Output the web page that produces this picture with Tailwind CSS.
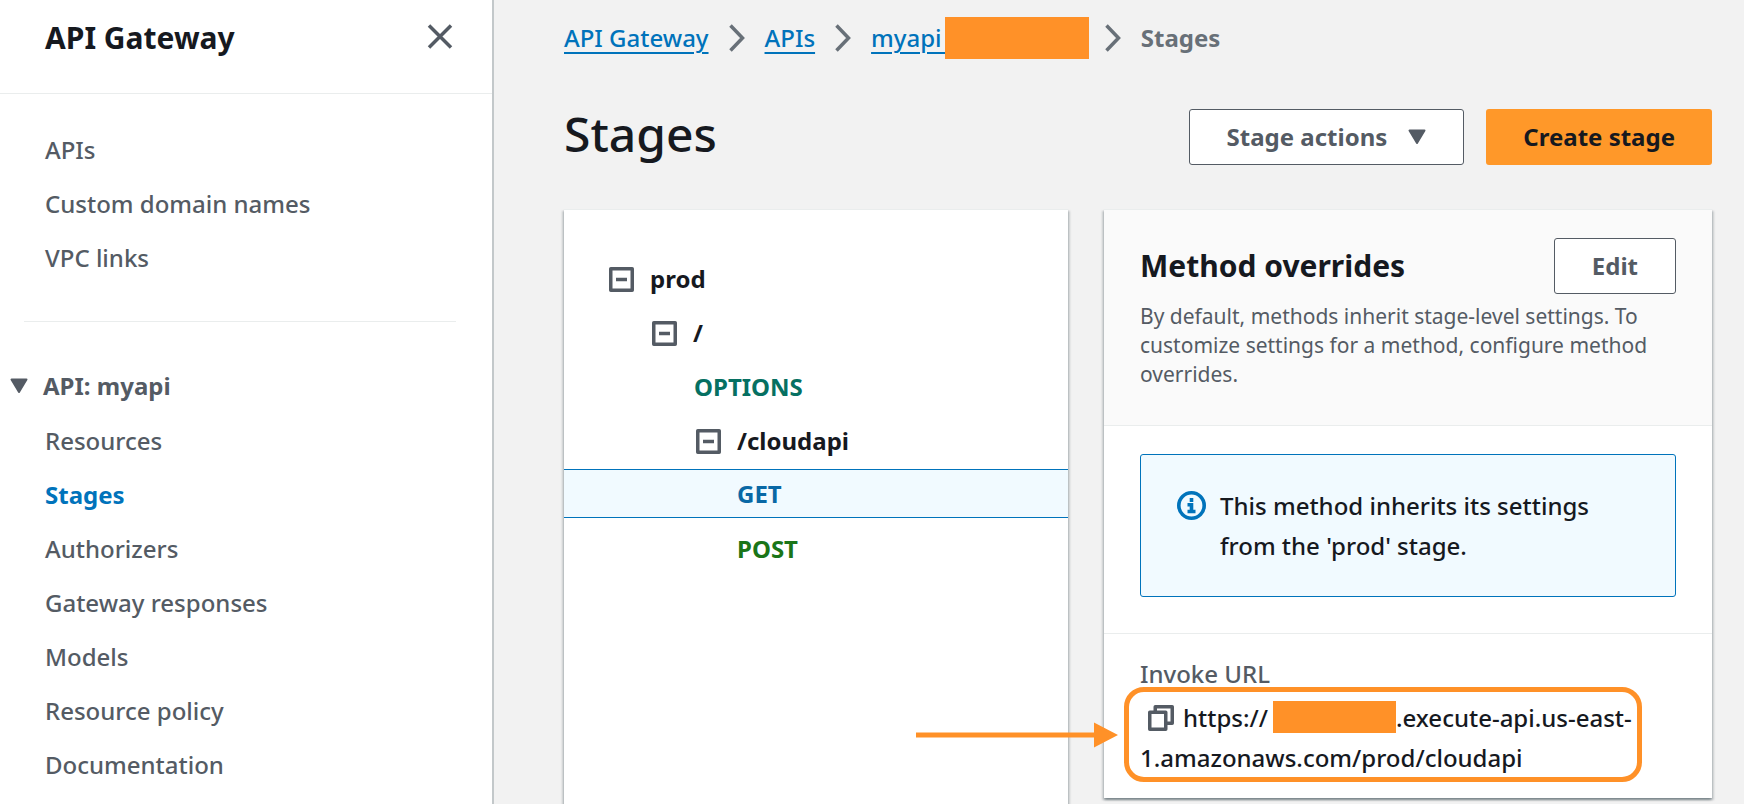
<!DOCTYPE html>
<html lang="en">
<head>
<meta charset="utf-8">
<meta name="viewport" content="width=device-width, initial-scale=1">
<title>API Gateway - Stages</title>
<script src="https://cdn.jsdelivr.net/npm/@tailwindcss/browser@4"></script>
</head>
<body class="flex min-h-screen bg-[#f2f2f2] font-['Noto_Sans','Open_Sans',sans-serif] text-2xl font-medium text-[#16191f]">

<!-- Side navigation -->
<aside class="w-[494px] shrink-0 border-r-2 border-[#c3c8ca] bg-white text-[#545b64]">
  <header class="flex h-[94px] items-start justify-between border-b border-[#eaeded] pt-5 pr-[39px] pl-[45px]">
    <h2 class="text-[30px] leading-9 font-bold text-[#16191f]">API Gateway</h2>
    <button type="button" aria-label="Close navigation" class="mt-1">
      <svg class="size-[26px]" viewBox="0 0 26 26" fill="none" stroke="#545b64" stroke-width="3.500"><path d="M2 1.500l22 22M24 1.500L2 23.500"/></svg>
    </button>
  </header>
  <nav aria-label="API Gateway" class="pt-[29px]">
    <ul class="pl-[45px] leading-[54px]">
      <li><a href="#apis">APIs</a></li>
      <li><a href="#domains">Custom domain names</a></li>
      <li><a href="#vpc">VPC links</a></li>
    </ul>
    <hr class="my-9 mr-9 ml-6 border-[#eaeded]">
    <button type="button" aria-expanded="true" class="flex h-14 items-center gap-[15px] pl-[10px] font-bold">
      <svg class="h-4 w-[18px]" viewBox="0 0 18 16" fill="#545b64" stroke="#545b64" stroke-width="2" stroke-linejoin="round"><path d="M1.500 1.500h15L9 14z"/></svg>
      API: myapi
    </button>
    <ul class="pl-[45px] leading-[54px]">
      <li><a href="#resources">Resources</a></li>
      <li><a href="#stages" aria-current="page" class="font-bold text-[#0073bb]">Stages</a></li>
      <li><a href="#authorizers">Authorizers</a></li>
      <li><a href="#responses">Gateway responses</a></li>
      <li><a href="#models">Models</a></li>
      <li><a href="#policy">Resource policy</a></li>
      <li><a href="#documentation">Documentation</a></li>
    </ul>
  </nav>
</aside>

<main class="flex min-w-0 flex-1 flex-col pt-4 pr-8 pl-[70px]">
  <nav aria-label="Breadcrumb">
    <ol class="flex h-11 items-center gap-5 text-[#0073bb]">
      <li><a href="#home" class="underline decoration-2 underline-offset-5">API Gateway</a></li>
      <li aria-hidden="true"><svg class="h-7 w-4" viewBox="0 0 16 28" fill="none" stroke="#687078" stroke-width="3.500"><path d="M1.500 1.500L13.500 14L1.500 26.500"/></svg></li>
      <li><a href="#apis" class="underline decoration-2 underline-offset-5">APIs</a></li>
      <li aria-hidden="true"><svg class="h-7 w-4" viewBox="0 0 16 28" fill="none" stroke="#687078" stroke-width="3.500"><path d="M1.500 1.500L13.500 14L1.500 26.500"/></svg></li>
      <li class="flex items-center"><a href="#myapi" class="whitespace-pre underline decoration-2 underline-offset-5">myapi </a><span class="-mr-1 -ml-[3px] h-[42px] w-36 bg-[#ff9128]"></span></li>
      <li aria-hidden="true"><svg class="h-7 w-4" viewBox="0 0 16 28" fill="none" stroke="#687078" stroke-width="3.500"><path d="M1.500 1.500L13.500 14L1.500 26.500"/></svg></li>
      <li aria-current="page" class="font-bold text-[#687078]">Stages</li>
    </ol>
  </nav>

  <div class="mt-[45px] flex items-start justify-between">
    <h1 class="text-5xl leading-[58px]">Stages</h1>
    <div class="mt-1 flex gap-[22px] font-bold">
      <button type="button" aria-haspopup="menu" class="flex h-14 items-center gap-[21px] rounded-[3px] border border-[#545b64] bg-white px-[37px] text-[#545b64]">
        Stage actions
        <svg class="h-4 w-[18px]" viewBox="0 0 18 16" fill="#545b64" stroke="#545b64" stroke-width="2" stroke-linejoin="round"><path d="M1.500 1.500h15L9 14z"/></svg>
      </button>
      <button type="button" class="h-14 rounded-[3px] bg-[#ff9829] px-[37px]">Create stage</button>
    </div>
  </div>

  <div class="mt-11 grid flex-1 grid-cols-[504fr_608fr] gap-9">
    <!-- Stage tree -->
    <section aria-label="Stage tree" class="border-t border-[#eaeded] bg-white pt-[42px] font-bold shadow-[0_2px_2px_rgba(0,28,36,0.3),2px_2px_2px_rgba(0,28,36,0.15),-2px_2px_2px_rgba(0,28,36,0.15)]">
      <ul>
        <li class="flex h-[54px] items-center gap-4 pl-[45px]">
          <button type="button" aria-label="Collapse prod"><svg class="size-[25px]" viewBox="0 0 25 25" fill="none" stroke="#545b64" stroke-width="3.500" stroke-linejoin="round"><path d="M1.750 1.750h21.500v21.500h-21.500zM7 12.500h11"/></svg></button>
          prod
        </li>
        <li class="flex h-[54px] items-center gap-4 pl-[88px]">
          <button type="button" aria-label="Collapse /"><svg class="size-[25px]" viewBox="0 0 25 25" fill="none" stroke="#545b64" stroke-width="3.500" stroke-linejoin="round"><path d="M1.750 1.750h21.500v21.500h-21.500zM7 12.500h11"/></svg></button>
          /
        </li>
        <li class="flex h-[54px] items-center pl-[130px]"><a href="#options" class="text-[#067062]">OPTIONS</a></li>
        <li class="flex h-[54px] items-center gap-4 pl-[132px]">
          <button type="button" aria-label="Collapse /cloudapi"><svg class="size-[25px]" viewBox="0 0 25 25" fill="none" stroke="#545b64" stroke-width="3.500" stroke-linejoin="round"><path d="M1.750 1.750h21.500v21.500h-21.500zM7 12.500h11"/></svg></button>
          /cloudapi
        </li>
        <li class="mt-px mb-1 flex h-[49px] items-center border-y border-[#0073bb] bg-[#f1faff] pl-[173px]"><a href="#get" aria-current="true" class="text-[#0968a5]">GET</a></li>
        <li class="flex h-[54px] items-center pl-[173px]"><a href="#post" class="text-[#1a7518]">POST</a></li>
      </ul>
    </section>

    <!-- Method details -->
    <section aria-labelledby="overrides" class="self-start border-t border-[#eaeded] bg-white shadow-[0_2px_2px_rgba(0,28,36,0.3),2px_2px_2px_rgba(0,28,36,0.15),-2px_2px_2px_rgba(0,28,36,0.15)]">
      <header class="border-b border-[#eaeded] bg-[#fafafa] px-9 pt-7 pb-9">
        <div class="flex items-center justify-between">
          <h2 id="overrides" class="text-[30px] leading-9 font-bold">Method overrides</h2>
          <button type="button" class="h-14 rounded-[3px] border border-[#545b64] bg-white px-[37px] font-bold text-[#545b64]">Edit</button>
        </div>
        <p class="mt-2 text-[21px] leading-[29px] font-normal text-[#545b64]">By default, methods inherit stage-level settings. To customize settings for a method, configure method overrides.</p>
      </header>
      <div class="border-b border-[#eaeded] px-9 pt-7 pb-9">
        <div role="status" class="flex items-start gap-[14px] rounded-[3px] border border-[#0073bb] bg-[#f1faff] px-9 pt-[31px] pb-[30px]">
          <svg class="mt-[5px] size-[29px] shrink-0" viewBox="0 0 29 29" fill="none" stroke="#0073bb" stroke-width="3.600"><circle cx="14.500" cy="14.500" r="12.700"/><path d="M14.500 7v4M10.500 13.700h4v6.800M10.500 20.500h8"/></svg>
          <p class="leading-10">This method inherits its settings from the 'prod' stage.</p>
        </div>
      </div>
      <div class="px-9 pt-5 pb-5 leading-10">
        <h3 class="text-[#545b64]">Invoke URL</h3>
        <div class="relative mt-1">
          <p><button type="button" aria-label="Copy invoke URL" class="mr-[9px] ml-2 inline-block align-[-4px]"><svg class="size-[26px]" viewBox="0 0 26 26" fill="none" stroke="#545b64" stroke-width="3.500" stroke-linejoin="round"><path d="M1.750 7.250h16v17h-16zM7.250 7V1.750h17v16.500H18"/></svg></button>https://<span class="ml-[5px] inline-block h-8 w-[123px] bg-[#ff9128] align-[-6px]"></span><span>.execute-api.us-east-</span><wbr><span>1.amazonaws.com/prod/cloudapi</span></p>
          <!-- Callout frame and arrow over the URL -->
          <div class="pointer-events-none absolute -top-[11px] right-[34px] -bottom-1 -left-4 rounded-[20px] border-5 border-[#ff9128]"></div>
          <svg class="pointer-events-none absolute top-6 right-full mr-[22px] h-[26px] w-[202px]" viewBox="0 0 202 26" fill="#ff9128"><path d="M0 10.500h178V0.500L202 13l-24 12.500V15.500H0z"/></svg>
        </div>
      </div>
    </section>
  </div>
</main>
</body>
</html>
